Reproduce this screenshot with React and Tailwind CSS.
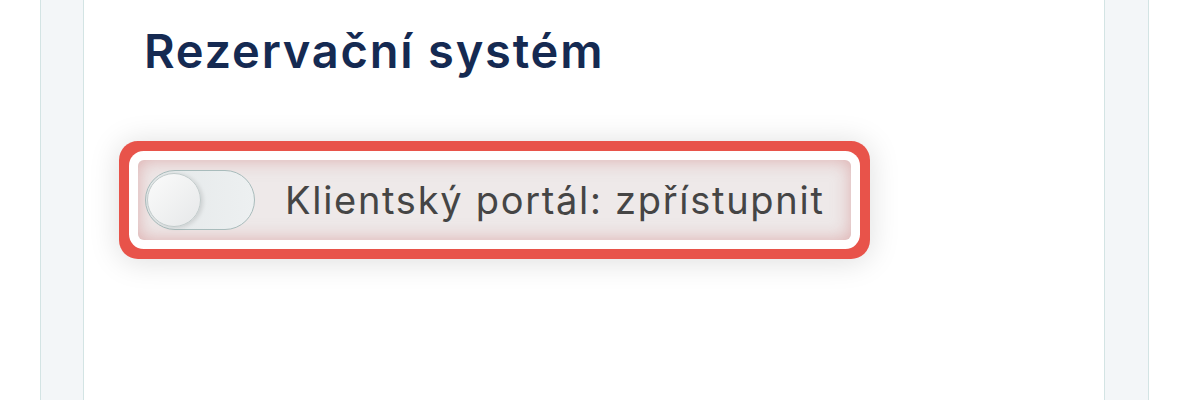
import React, { useState } from "react";

const Toggle = ({ checked, onChange }) => (
  <button
    type="button"
    onClick={() => onChange(!checked)}
    className="relative w-[110px] h-[60px] shrink-0 rounded-full border-[1.5px] border-[#a9bcbc] bg-gradient-to-r from-[#e4e8e9] to-[#edf0f1]"
  >
    <span
      className={`absolute top-[2px] ${checked ? "left-[52px]" : "left-[1px]"} w-[54px] h-[54px] rounded-full border border-[#c2cbcb] bg-gradient-to-br from-[#fbfbfb] to-[#e6e8e9] shadow-[2px_1px_4px_rgba(0,0,0,0.12)]`}
    />
  </button>
);

const App = () => {
  const [portal, setPortal] = useState(false);

  return (
    <div className="w-full h-[400px] bg-white pl-[40px] pr-[51px] font-['Inter',sans-serif] overflow-hidden">
      <div className="h-full border-x border-[#d3e4e4] bg-[#f3f6f8] pl-[42px] pr-[43px]">
        <div className="h-full bg-white border-x border-[#d3e4e4] pl-[54px] pt-[27px]">
          <h2 className="ml-[6px] text-[47px] leading-none font-semibold text-[#152a52] tracking-[0.038em]">
            Rezervační systém
          </h2>

          <div className="mt-[86px] inline-flex items-center gap-[30px] h-[80px] pl-[7px] pr-[26px] rounded-[6px] bg-[#eee9e9] shadow-[inset_0_0_18px_rgba(205,115,115,0.5),0_0_0_9px_#ffffff,0_0_0_19px_#e8534a,0_2px_30px_20px_rgba(0,0,0,0.13)]">
            <Toggle checked={portal} onChange={setPortal} />
            <span className="text-[38px] leading-none text-[#454545] tracking-[0.045em]">
              Klientský portál: zpřístupnit
            </span>
          </div>
        </div>
      </div>
    </div>
  );
};

export default App;
